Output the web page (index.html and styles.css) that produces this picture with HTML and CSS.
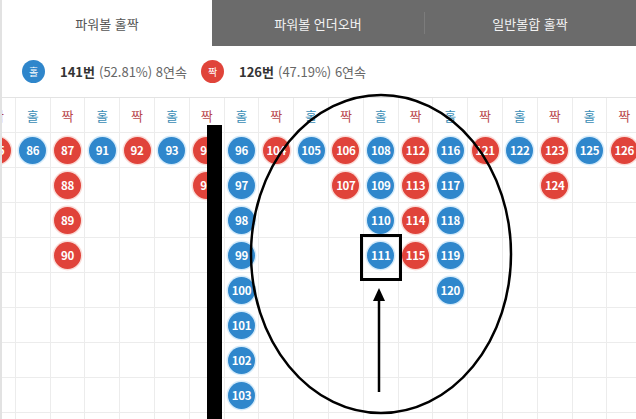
FILE: index.html
```html
<!DOCTYPE html>
<html lang="ko">
<head>
<meta charset="utf-8">
<link rel="stylesheet" href="styles.css">
</head>
<body>
<div class="page">
  <nav class="tabs">
    <div class="tab active">파워볼 홀짝</div>
    <div class="tab">파워볼 언더오버</div>
    <div class="tab sep">일반볼합 홀짝</div>
  </nav>
  <div class="stats">
    <div class="stat"><span class="dot odd">홀</span><b>141번</b><span class="muted">(52.81%) 8연속</span></div>
    <div class="stat"><span class="dot even">짝</span><b>126번</b><span class="muted">(47.19%) 6연속</span></div>
  </div>
  <div class="board" id="board"></div>
  <svg class="marks" width="636" height="419" viewBox="0 0 636 419">
    <rect x="207" y="125" width="15" height="300" fill="#000"/>
    <ellipse cx="381" cy="254" rx="130" ry="159" fill="none" stroke="#000" stroke-width="2.5"/>
    <rect x="361.5" y="235.5" width="39" height="44" fill="none" stroke="#000" stroke-width="3"/>
    <line x1="379" y1="392" x2="379" y2="298" stroke="#000" stroke-width="2.5"/>
    <polygon points="379,288 373,301 385,301" fill="#000"/>
  </svg>
</div>
<script>
var cols = [
  ['e',[85]],['o',[86]],['e',[87,88,89,90]],['o',[91]],['e',[92]],['o',[93]],['e',[94,95]],
  ['o',[96,97,98,99,100,101,102,103]],['e',[104]],['o',[105]],['e',[106,107]],['o',[108,109,110,111]],
  ['e',[112,113,114,115]],['o',[116,117,118,119,120]],['e',[121]],['o',[122]],['e',[123,124]],['o',[125]],['e',[126]]
];
var board = document.getElementById('board');
cols.forEach(function(c){
  var col = document.createElement('div');
  col.className = 'col';
  var h = document.createElement('div');
  h.className = 'cell head ' + (c[0]==='o' ? 'odd-t' : 'even-t');
  h.textContent = c[0]==='o' ? '홀' : '짝';
  col.appendChild(h);
  for (var i=0;i<9;i++){
    var cell = document.createElement('div');
    cell.className = 'cell';
    if (i < c[1].length){
      var b = document.createElement('span');
      b.className = 'ball ' + (c[0]==='o' ? 'odd' : 'even');
      b.textContent = c[1][i];
      cell.appendChild(b);
    }
    col.appendChild(cell);
  }
  board.appendChild(col);
});
</script>
</body>
</html>
```

FILE: styles.css
```css
html, body {
  margin: 0;
  padding: 0;
  background: #fff;
}
.page {
  position: relative;
  width: 636px;
  height: 419px;
  overflow: hidden;
  font-family: "Noto Sans CJK KR", "Noto Sans", sans-serif;
  border-left: 2px solid #e2e2e2;
  box-sizing: border-box;
}
.tabs {
  display: flex;
  height: 46px;
  background: #6b6b6b;
}
.tab {
  width: 212px;
  display: flex;
  align-items: center;
  justify-content: center;
  color: #f2f2f2;
  font-size: 13px;
  position: relative;
}
.tab.active {
  width: 210px;
  background: #fff;
  color: #555;
}
.tab.sep::before {
  content: "";
  position: absolute;
  left: 0;
  top: 12px;
  height: 22px;
  width: 1px;
  background: #7c7c7c;
}
.stats {
  height: 51px;
  border-bottom: 1px solid #e3e3e3;
  display: flex;
  align-items: center;
  padding-left: 20px;
  gap: 14px;
  box-sizing: content-box;
}
.stat {
  display: flex;
  align-items: center;
  font-size: 13px;
  color: #333;
  white-space: pre;
}
.stat b {
  font-weight: 700;
  color: #333;
}
.muted {
  color: #666;
  margin-left: 4px;
}
.dot {
  width: 23px;
  height: 23px;
  border-radius: 50%;
  color: #fff;
  font-size: 10px;
  display: inline-flex;
  align-items: center;
  justify-content: center;
  margin-right: 15px;
}
.dot.odd { background: #2f86cb; }
.dot.even { background: #e0443a; }
.board {
  display: flex;
  margin-left: -21px;
}
.col {
  width: 34.8px;
  flex: none;
  display: flex;
  flex-direction: column;
}
.cell {
  height: 35px;
  box-sizing: border-box;
  border-right: 1px solid #ececec;
  border-bottom: 1px solid #ececec;
  display: flex;
  align-items: center;
  justify-content: center;
}
.head {
  font-size: 13px;
  padding-top: 1px;
}
.odd-t { color: #3a8db5; }
.even-t { color: #b9474c; }
.ball {
  width: 27px;
  height: 27px;
  border-radius: 50%;
  color: #fff;
  font-size: 11.5px;
  font-weight: 600;
  letter-spacing: -0.3px;
  display: flex;
  align-items: center;
  justify-content: center;
}
.ball.odd {
  background: #2f87cc;
  box-shadow: 0 0 0 1.5px #d5ebfa;
}
.ball.even {
  background: #e0433a;
  box-shadow: 0 0 0 1.5px #fadcd8;
}
.marks {
  position: absolute;
  left: -2px;
  top: 0;
  pointer-events: none;
}
```
